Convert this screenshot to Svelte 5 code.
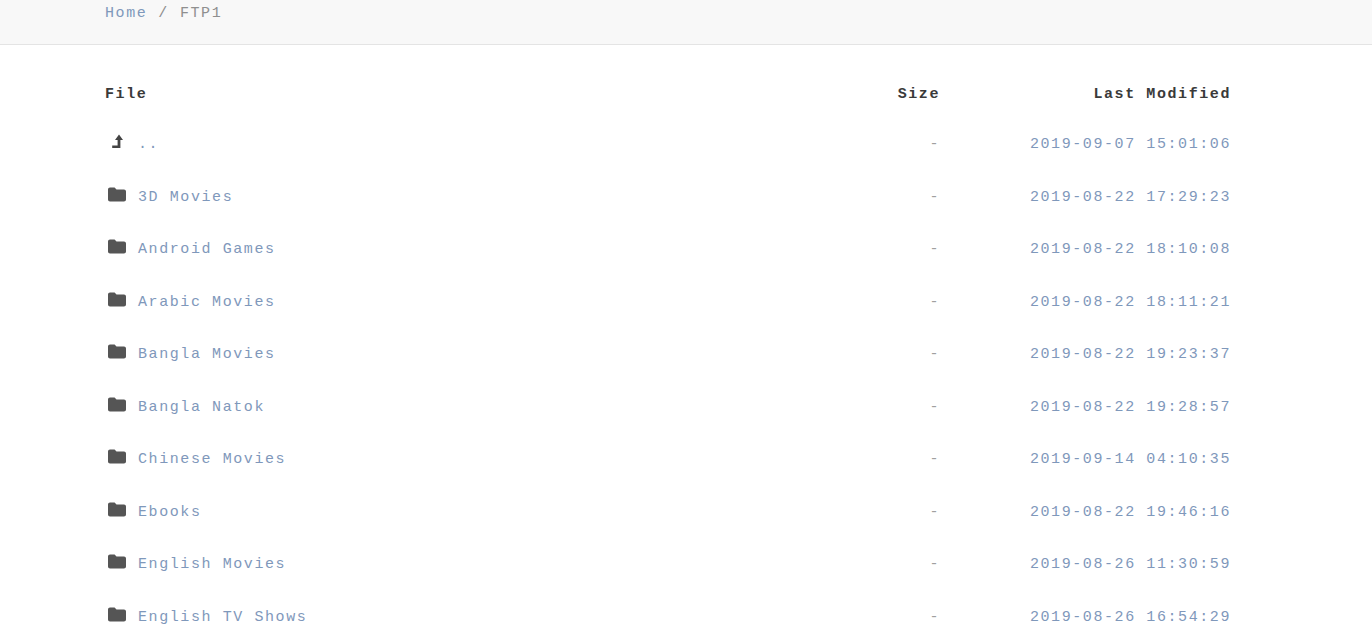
<script lang="ts">
  const rows = [
    { name: "..", modified: "2019-09-07 15:01:06", up: true },
    { name: "3D Movies", modified: "2019-08-22 17:29:23" },
    { name: "Android Games", modified: "2019-08-22 18:10:08" },
    { name: "Arabic Movies", modified: "2019-08-22 18:11:21" },
    { name: "Bangla Movies", modified: "2019-08-22 19:23:37" },
    { name: "Bangla Natok", modified: "2019-08-22 19:28:57" },
    { name: "Chinese Movies", modified: "2019-09-14 04:10:35" },
    { name: "Ebooks", modified: "2019-08-22 19:46:16" },
    { name: "English Movies", modified: "2019-08-26 11:30:59" },
    { name: "English TV Shows", modified: "2019-08-26 16:54:29" },
  ];
</script>

<div class="page">
  <nav class="crumbs">
    <a href="#home">Home</a><span class="sep">/</span><span class="current">FTP1</span>
  </nav>

  <table class="listing">
    <thead>
      <tr>
        <th class="name">File</th>
        <th class="size">Size</th>
        <th class="modified">Last Modified</th>
      </tr>
    </thead>
    <tbody>
      {#each rows as row}
        <tr>
          <td class="name">
            <div class="entry">
              <span class="icon">
                {#if row.up}
                  <svg viewBox="0 0 18 18" width="18" height="18">
                    <path d="M11 1.500 15 7h-2.600v8H4.200v-2.600h5.400V7H7z" fill="#444" />
                  </svg>
                {:else}
                  <svg viewBox="0 0 18 18" width="18" height="18">
                    <path d="M0 3.500C0 2.400.9 1.500 2 1.500h4.600l1.900 2H16c1.100 0 2 .9 2 2v8c0 1.100-.9 2-2 2H2c-1.100 0-2-.9-2-2z" fill="#555" />
                  </svg>
                {/if}
              </span>
              <a href="#dir">{row.name}</a>
            </div>
          </td>
          <td class="size">-</td>
          <td class="modified">{row.modified}</td>
        </tr>
      {/each}
    </tbody>
  </table>
</div>

<style>
  :global(body) {
    background: #fff;
    overflow: hidden;
  }

  .page {
    height: 641px;
    overflow: hidden;
    font-family: "Liberation Mono", monospace;
    font-size: 15px;
    letter-spacing: 1.58px;
    color: #8f8f8f;
  }

  a {
    color: #7f98bb;
    text-decoration: none;
  }

  .crumbs {
    height: 44px;
    padding-left: 105px;
    line-height: 27px;
    background: #f8f8f8;
    border-bottom: 1px solid #e4e4e4;
  }

  .sep {
    margin: 0 11px;
  }

  .listing {
    width: 1126px;
    margin: 25px 0 0 105px;
    border-collapse: separate;
    border-spacing: 0;
    table-layout: fixed;
  }

  th {
    height: 48.5px;
    padding: 0;
    font-weight: 700;
    color: #3a3a3a;
  }

  td {
    height: 52.5px;
    padding: 0;
    color: #a0a0a0;
  }

  .name {
    text-align: left;
  }

  .size {
    width: 120px;
    text-align: right;
  }

  .modified {
    width: 291px;
    text-align: right;
  }

  td.modified {
    color: #7f98bb;
  }

  .entry {
    display: flex;
    align-items: center;
  }

  .icon {
    flex: 0 0 33px;
    height: 18px;
    padding-left: 3px;
    box-sizing: border-box;
    margin-top: -5px;
  }

  .icon svg {
    display: block;
  }
</style>
